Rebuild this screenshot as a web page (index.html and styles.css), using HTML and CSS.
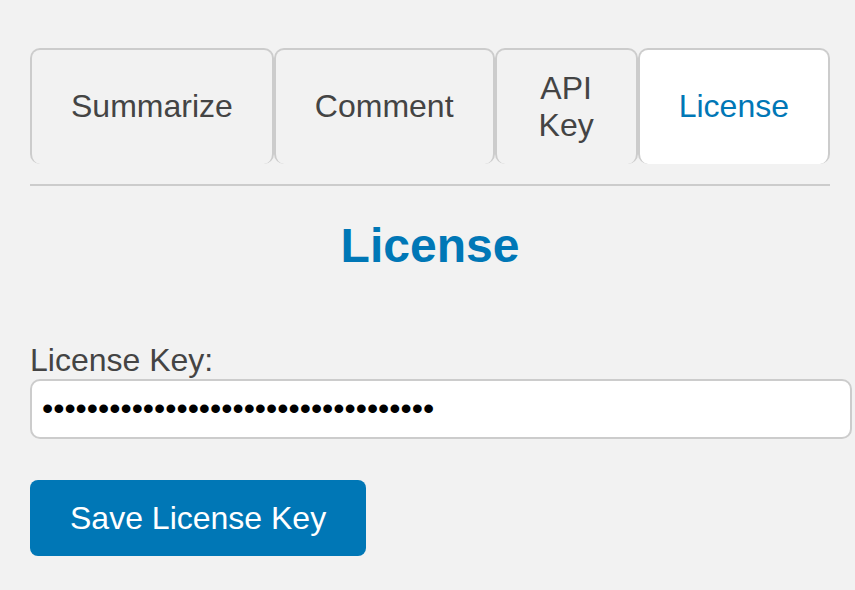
FILE: index.html
```html
<!DOCTYPE html>
<html lang="en">
<head>
<meta charset="utf-8">
<title>License</title>
<link rel="stylesheet" href="styles.css">
</head>
<body>
<div class="container">
  <div class="tabs">
    <button class="tab">Summarize</button>
    <button class="tab">Comment</button>
    <button class="tab">API Key</button>
    <button class="tab active">License</button>
  </div>
  <hr class="divider">
  <h2 class="title">License</h2>
  <label class="field-label" for="key">License Key:</label>
  <input class="field-input" id="key" type="password" value="abcdefghijklmnopqrstuvwxyz012345678">
  <button class="save-btn">Save License Key</button>
</div>
</body>
</html>
```
FILE: styles.css
```css
html, body {
  margin: 0;
  padding: 0;
  background: #f2f2f2;
}

body {
  font-family: "Liberation Sans", Arial, sans-serif;
  color: #444;
}

.container {
  width: 800px;
  padding: 48px 30px;
}

.tabs {
  display: flex;
}

.tab {
  flex: 1 1 auto;
  padding: 20px 39px;
  font-family: inherit;
  font-size: 32px;
  line-height: 36.8px;
  color: #444;
  background: #f2f2f2;
  border: 2px solid #ccc;
  border-bottom: none;
  border-radius: 10px;
  margin: 0;
}

.tab.active {
  background: #fff;
  color: #0077b6;
}

.divider {
  margin: 20px 0 0;
  border: 0;
  border-top: 2px solid #ccc;
  height: 0;
}

.title {
  margin: 33px 0 0;
  font-size: 48px;
  line-height: 54px;
  text-align: center;
  color: #0077b6;
  font-weight: bold;
}

.field-label {
  display: block;
  margin-top: 69px;
  font-size: 32px;
  line-height: 37px;
  color: #444;
}

.field-input {
  display: block;
  box-sizing: border-box;
  width: 822px;
  height: 60px;
  margin: 0;
  padding: 9px 10px;
  border: 2px solid #ccc;
  border-radius: 10px;
  background: #fff;
  font-family: inherit;
  font-size: 32px;
  color: #000;
  outline: none;
}

.save-btn {
  display: block;
  margin-top: 41px;
  padding: 20px 40px;
  background: #0077b6;
  color: #fff;
  border: none;
  border-radius: 8px;
  font-family: inherit;
  font-size: 32px;
  line-height: 36px;
}
```
